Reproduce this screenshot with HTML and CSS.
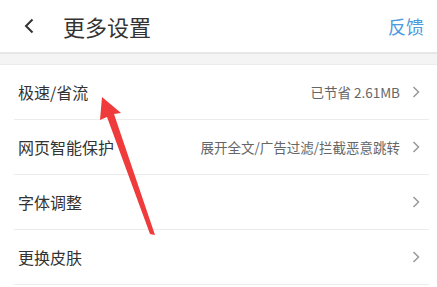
FILE: index.html
```html
<!DOCTYPE html>
<html lang="zh">
<head>
<meta charset="utf-8">
<link rel="stylesheet" href="styles.css">
</head>
<body>
<div class="page">
  <header class="topbar">
    <svg class="back" width="10" height="16" viewBox="0 0 10 16"><path d="M8.5 1.5 L2 8 L8.5 14.5" fill="none" stroke="#333" stroke-width="2"/></svg>
    <div class="title">更多设置</div>
    <div class="feedback">反馈</div>
  </header>
  <div class="gap"></div>
  <ul class="list">
    <li class="row"><span class="label">极速/省流</span><span class="value">已节省 2.61MB</span><svg class="chev" width="8" height="12" viewBox="0 0 8 12"><path d="M1.5 1 L6.5 6 L1.5 11" fill="none" stroke="#999" stroke-width="1.5"/></svg></li>
    <li class="row"><span class="label">网页智能保护</span><span class="value">展开全文/广告过滤/拦截恶意跳转</span><svg class="chev" width="8" height="12" viewBox="0 0 8 12"><path d="M1.5 1 L6.5 6 L1.5 11" fill="none" stroke="#999" stroke-width="1.5"/></svg></li>
    <li class="row"><span class="label">字体调整</span><span class="value"></span><svg class="chev" width="8" height="12" viewBox="0 0 8 12"><path d="M1.5 1 L6.5 6 L1.5 11" fill="none" stroke="#999" stroke-width="1.5"/></svg></li>
    <li class="row"><span class="label">更换皮肤</span><span class="value"></span><svg class="chev" width="8" height="12" viewBox="0 0 8 12"><path d="M1.5 1 L6.5 6 L1.5 11" fill="none" stroke="#999" stroke-width="1.5"/></svg></li>
  </ul>
  <svg class="arrow" width="437" height="287" viewBox="0 0 437 287"><polygon points="102,97 121,113 114,114 155,235 150,234 107,117 100,120" fill="#ef3b3b"/></svg>
</div>
</body>
</html>
```
FILE: styles.css
```css
html, body {
  margin: 0;
  padding: 0;
  background: #fff;
}
body {
  font-family: "Noto Sans CJK SC", "Noto Sans", sans-serif;
  color: #333;
}
.page {
  position: relative;
  width: 437px;
  height: 287px;
  overflow: hidden;
}
.topbar {
  height: 52px;
  display: flex;
  align-items: center;
  padding: 0 13px 0 24px;
}
.back {
  margin-right: 29px;
}
.title {
  font-size: 22px;
  color: #333;
  line-height: 1;
  flex: 1;
}
.feedback {
  font-size: 18px;
  color: #4a9be0;
  line-height: 1;
}
.gap {
  height: 10px;
  background: #f4f4f4;
  border-top: 2px solid #e6e6e6;
  border-bottom: 1px solid #ececec;
}
.list {
  list-style: none;
  margin: 0;
  padding: 0 8px 0 14px;
}
.row {
  height: 54px;
  display: flex;
  align-items: center;
  padding: 0 9px 0 4px;
  border-bottom: 1px solid #ececec;
}
.label {
  font-size: 16px;
  color: #333;
  flex: 1;
}
.value {
  font-size: 13.5px;
  color: #666;
  margin-right: 12px;
}
.arrow {
  position: absolute;
  left: 0;
  top: 0;
  pointer-events: none;
}
```
